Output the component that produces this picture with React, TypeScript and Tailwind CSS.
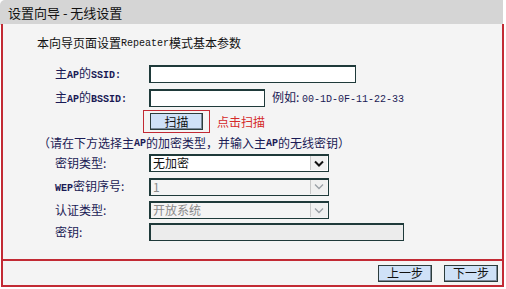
import type { ReactNode } from 'react';

// ASCII parts use a narrow mono face, CJK falls back to Noto Sans CJK
function M({ children, bold = false }: { children: ReactNode; bold?: boolean }) {
  return (
    <span className={`font-['Liberation_Mono',monospace] text-[10px] ${bold ? 'font-bold' : ''}`}>
      {children}
    </span>
  );
}

function Label({ children }: { children: ReactNode }) {
  return <div className="w-[94px] shrink-0 pl-[52px] box-content whitespace-nowrap">{children}</div>;
}

function TextBox({ width, disabled = false }: { width: string; disabled?: boolean }) {
  return (
    <div
      className={`${width} h-[18px] border border-[#1f3a3a] shadow-[inset_1px_1px_0_#1f3a3a] ${
        disabled ? 'bg-[#ececec]' : 'bg-white'
      }`}
    />
  );
}

function Select({ value, disabled = false }: { value: string; disabled?: boolean }) {
  return (
    <div
      className={`w-[180px] h-[18px] flex items-stretch border border-[#1f3a3a] shadow-[inset_1px_1px_0_#1f3a3a] ${
        disabled ? 'bg-[#f4f4f4] text-[#8a8a8a]' : 'bg-white text-[#111]'
      }`}
    >
      <div className="flex-1 pl-[3px] leading-[16px] text-[12px]">{value}</div>
      <div className="w-[17px] m-[1px] flex items-center justify-center bg-[#f0f0f0] border-l border-[#c8c8c8]">
        <svg width="10" height="7" viewBox="0 0 10 7">
          <path
            d="M1 1.5 L5 5.5 L9 1.5"
            fill="none"
            stroke={disabled ? '#9aa0a6' : '#111'}
            strokeWidth={disabled ? 1.3 : 2}
          />
        </svg>
      </div>
    </div>
  );
}

function NavButton({ children }: { children: ReactNode }) {
  return (
    <button
      type="button"
      className="w-[54px] h-[17px] flex items-center justify-center bg-[#cfe1f7] border border-[#2c3c3c] shadow-[inset_-1px_-1px_0_#7a8a9a] text-[12px] text-[#111] leading-none"
    >
      {children}
    </button>
  );
}

export default function App() {
  return (
    <div className="w-[506px] h-[289px] bg-white font-['Noto_Sans_CJK_SC',sans-serif] text-[12px] text-[#1a1a55] overflow-hidden">
      {/* Header */}
      <div className="w-[503px] h-[25px] bg-[#d5d5d5] rounded-tl-[5px] flex items-center pl-[8px] text-[13px] text-[#111]">
        设置向导 - 无线设置
      </div>

      {/* Body */}
      <div className="w-[503px] ml-[1px] -mt-[1px] border-x-2 border-b-2 border-[#c22a34] bg-[#f4f4f4]">
        <div className="h-[235px] flex flex-col">
          <div className="mt-[10px] h-[18px] flex items-center pl-[34px] text-[#111]">
            本向导页面设置<M>Repeater</M>模式基本参数
          </div>

          <div className="mt-[12px] flex items-center">
            <Label>
              主<M bold>AP</M>的<M bold>SSID:</M>
            </Label>
            <TextBox width="w-[207px]" />
          </div>

          <div className="mt-[5px] flex items-center">
            <Label>
              主<M bold>AP</M>的<M bold>BSSID:</M>
            </Label>
            <TextBox width="w-[116px]" />
            <div className="ml-[7px] whitespace-nowrap">
              例如: <M>00-1D-0F-11-22-33</M>
            </div>
          </div>

          <div className="mt-[3px] flex items-center">
            <div className="ml-[140px] w-[67px] h-[23px] border border-[#c22a34] flex items-center justify-center">
              <button
                type="button"
                className="w-[53px] h-[17px] flex items-center justify-center bg-[#cfe1f7] border border-[#2c3c3c] shadow-[inset_-1px_-1px_0_#7a8a9a] text-[12px] text-[#111] leading-none"
              >
                扫描
              </button>
            </div>
            <div className="ml-[7px] text-[#d42a2a]">点击扫描</div>
          </div>

          <div className="mt-[2px] h-[16px] flex items-center pl-[35px] whitespace-nowrap">
            （请在下方选择主<M bold>AP</M>的加密类型，并输入主<M bold>AP</M>的无线密钥）
          </div>

          <div className="mt-[3px] flex items-center">
            <Label>密钥类型:</Label>
            <Select value="无加密" />
          </div>

          <div className="mt-[5px] flex items-center">
            <Label>
              <M bold>WEP</M>密钥序号:
            </Label>
            <Select value="1" disabled />
          </div>

          <div className="mt-[5px] flex items-center">
            <Label>认证类型:</Label>
            <Select value="开放系统" disabled />
          </div>

          <div className="mt-[4px] flex items-center">
            <Label>密钥:</Label>
            <TextBox width="w-[255px]" disabled />
          </div>
        </div>

        {/* Footer */}
        <div className="h-[26px] border-t-2 border-[#c22a34] flex items-center justify-end gap-[12px] pr-[4px]">
          <NavButton>上一步</NavButton>
          <NavButton>下一步</NavButton>
        </div>
      </div>
    </div>
  );
}
